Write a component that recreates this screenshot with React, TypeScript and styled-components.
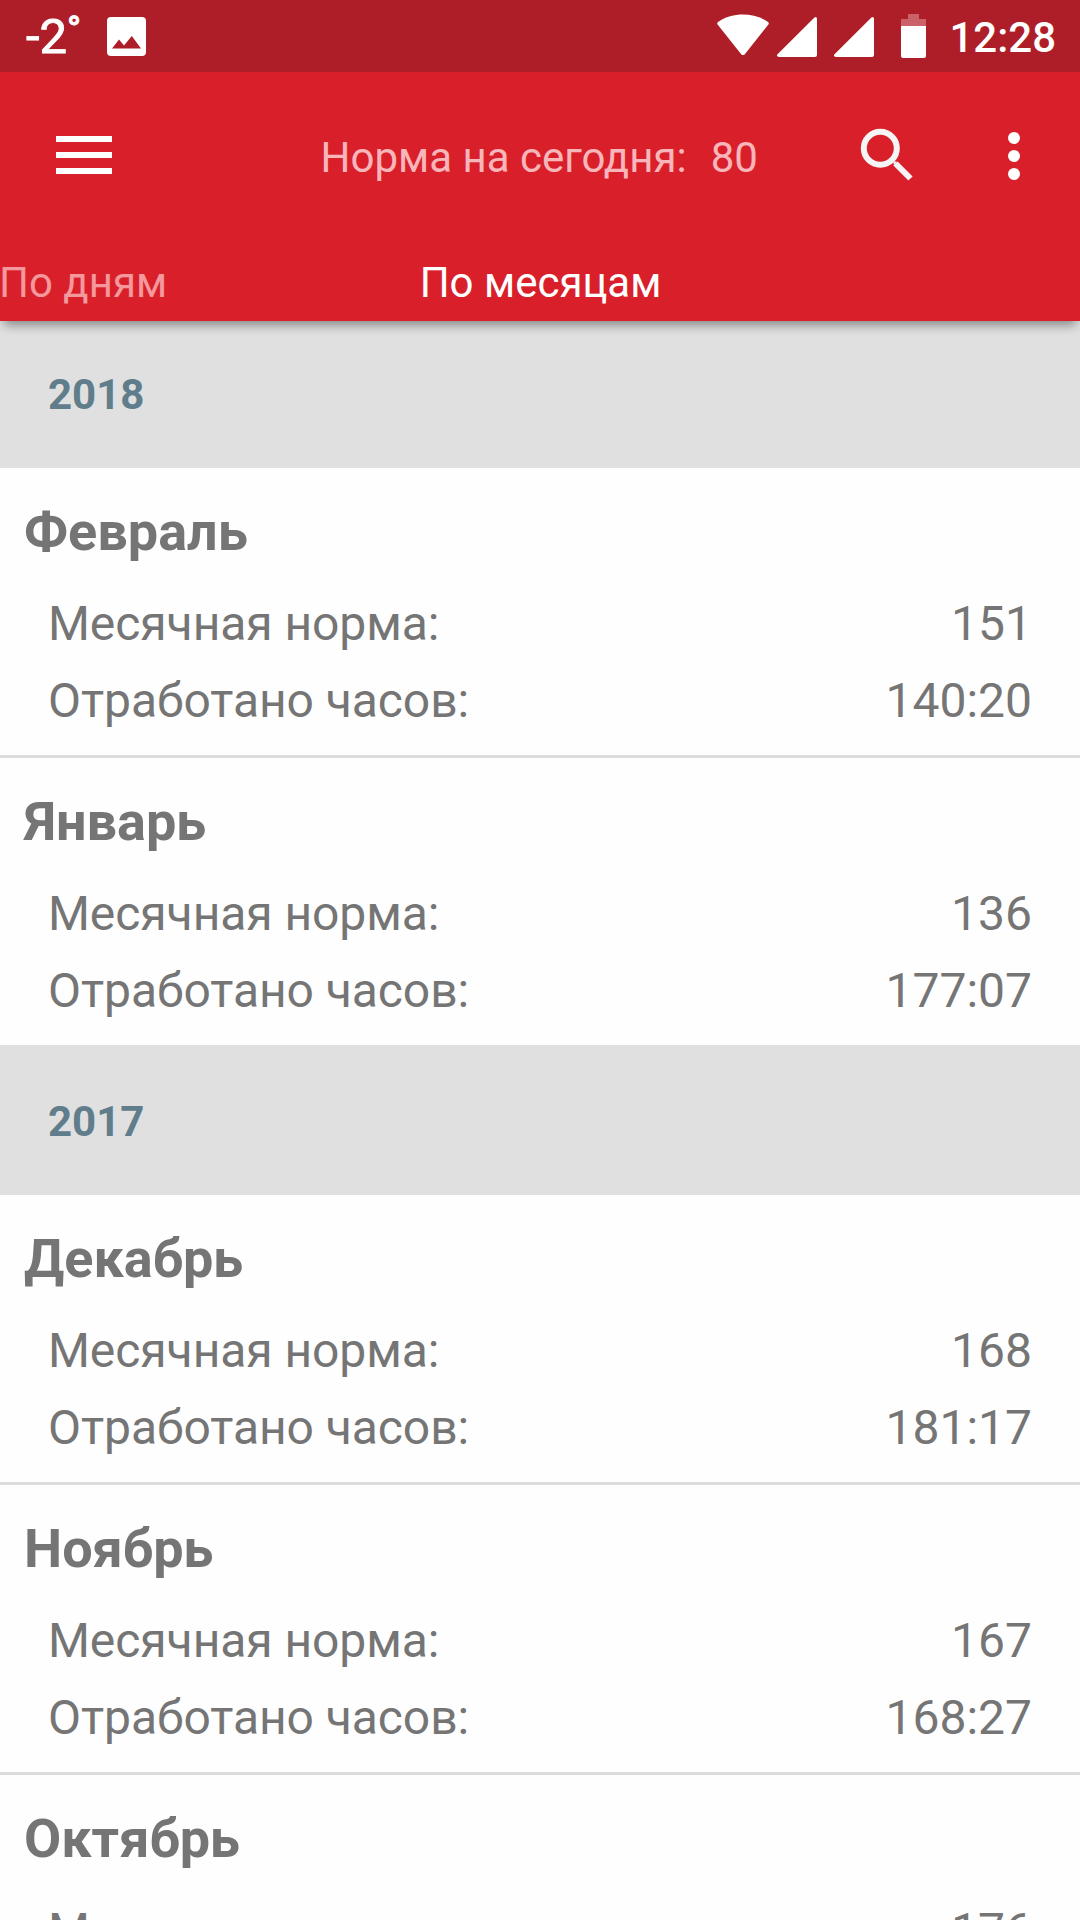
import React from "react";
import styled, { createGlobalStyle } from "styled-components";

const GlobalStyle = createGlobalStyle`
  * { box-sizing: border-box; }
  html, body { margin: 0; padding: 0; }
  body {
    background: #fefefe;
    font-family: Roboto, "Noto Sans", sans-serif;
    overflow: hidden;
  }
  svg { display: block; flex: none; }
`;

const Screen = styled.div`
  width: 1080px;
  height: 1920px;
  overflow: hidden;
  display: flex;
  flex-direction: column;
  background: #fefefe;
`;

const StatusBar = styled.header`
  flex: none;
  height: 72px;
  display: flex;
  align-items: center;
  justify-content: space-between;
  padding: 0 24px 0 26px;
  background: #ae1e28;
  color: #fff;
`;

const StatusGroup = styled.div`
  display: flex;
  align-items: center;
  height: 72px;
`;

const Temperature = styled.span`
  display: flex;
  width: 81px;
  height: 72px;
  font-size: 49px;
  line-height: 74px;
  font-weight: 400;
  -webkit-text-stroke: 0.9px #fff;
`;

const Degree = styled.span`
  font-size: 37px;
  line-height: 60px;
  font-weight: 500;
`;

const Clock = styled.time`
  width: 105px;
  padding-top: 3px;
  font-size: 42px;
  line-height: 69px;
  font-weight: 500;
  display: flex;
  justify-content: flex-end;
  white-space: nowrap;
`;

const AppBar = styled.div`
  flex: none;
  position: relative;
  z-index: 1;
  height: 249px;
  display: flex;
  flex-direction: column;
  background: #d9202a;
  box-shadow: 0 8px 10px -4px rgba(0, 0, 0, 0.4);
`;

const Toolbar = styled.div`
  height: 168px;
  display: flex;
  align-items: center;
`;

const IconButton = styled.button<{ $width: number; $lift?: number }>`
  flex: none;
  width: ${(p) => p.$width}px;
  height: 168px;
  padding: 0 0 ${(p) => p.$lift ?? 0}px;
  border: 0;
  background: none;
  display: flex;
  align-items: center;
  justify-content: center;
`;

const Title = styled.h1`
  flex: 1;
  margin: 0;
  padding: 3px 0 0 152.5px;
  display: flex;
  gap: 24px;
  font-size: 42px;
  line-height: 50px;
  font-weight: 400;
  color: #f9b6ba;
  white-space: nowrap;
`;

const Tabs = styled.nav`
  height: 81px;
  display: grid;
  grid-template-columns: 1fr auto 1fr;
  align-items: start;
`;

const Tab = styled.a<{ $active?: boolean }>`
  font-size: 42px;
  line-height: 50px;
  padding-top: 18px;
  color: ${(p) => (p.$active ? "#fff" : "#f3989c")};
  margin-left: ${(p) => (p.$active ? 1 : -1)}px;
  white-space: nowrap;
`;

const List = styled.main`
  flex: none;
  margin-top: -3px;
`;

const YearHeader = styled.h2`
  height: 150px;
  margin: 0;
  padding: 3px 48px 0;
  display: flex;
  align-items: center;
  background: #e0e0e0;
  color: #607d8b;
  font-size: 42px;
  font-weight: 700;
`;

const MonthItem = styled.article`
  height: 287px;
  padding: 10px 48px 16px;
  background: #fefefe;
  color: #757575;

  & + & {
    height: 290px;
    border-top: 3px solid #dcdcdc;
  }
`;

const MonthName = styled.h3`
  margin: 0 0 0 -24px;
  font-size: 54px;
  line-height: 107px;
  font-weight: 700;
`;

const Stat = styled.div`
  display: flex;
  justify-content: space-between;
  font-size: 48px;
  line-height: 77px;
`;

const StatLabel = styled.span`
  letter-spacing: -0.06px;
`;

const ImageIcon = () => (
  <svg width="39" height="39" viewBox="0 0 39 39">
    <rect width="39" height="39" rx="4" fill="#fff" />
    <path d="M5 31.5 12 22.5 17 28.5 24.8 19 34 31.5Z" fill="#ae1e28" />
  </svg>
);

const WifiIcon = () => (
  <svg width="52" height="42" viewBox="0 0 52 42" fill="#fff">
    <path d="M0.8 10.8C-0.2 9.5 0.1 8.6 1.4 7.7C15.5-1.8 36.5-1.8 50.6 7.7C51.9 8.6 52.2 9.5 51.2 10.8L28 39.9C26.6 41.5 25.4 41.5 24 39.9Z" />
  </svg>
);

const SignalIcon = () => (
  <svg width="40" height="40" viewBox="0 0 40 40" fill="#fff">
    <path d="M37.2 0.8C38.7-0.7 40 0.2 40 2V38Q40 40 38 40H2C0 40-0.8 38.4 0.8 36.9Z" />
  </svg>
);

const BatteryIcon = () => (
  <svg width="25" height="44" viewBox="0 0 25 44">
    <path d="M7 0H18V5H25V12H0V5H7Z" fill="#cb626a" />
    <path d="M0 12H25V42Q25 44 23 44H2Q0 44 0 42Z" fill="#fff" />
  </svg>
);

const StatusIcons = styled.div`
  display: grid;
  grid-template-columns: 60px 57px 67px 50px;
  align-items: start;
  height: 44px;

  svg:nth-child(2), svg:nth-child(3) { margin-top: 3px; }
`;

const MenuIcon = () => (
  <svg width="56" height="38" viewBox="0 0 56 38" fill="#fff">
    <path d="M0 0H56V6H0ZM0 16H56V22H0ZM0 32H56V38H0Z" />
  </svg>
);

const SearchIcon = () => (
  <svg width="54" height="54" viewBox="0 0 54 54" fill="none" stroke="#f5f5f5">
    <circle cx="20.3" cy="20.3" r="16.5" strokeWidth="6" />
    <path d="M35.5 35.5 50.5 50.5" strokeWidth="6" />
    <path d="M34.6 36.6V34.6H36.6" strokeWidth="2" />
  </svg>
);

const MoreIcon = () => (
  <svg width="12" height="48" viewBox="0 0 12 48" fill="#fff">
    <circle cx="6" cy="6" r="6" />
    <circle cx="6" cy="24" r="6" />
    <circle cx="6" cy="42" r="6" />
  </svg>
);

interface Month {
  name: string;
  norm: string;
  worked: string;
}

const years: { year: string; months: Month[] }[] = [
  {
    year: "2018",
    months: [
      { name: "Февраль", norm: "151", worked: "140:20" },
      { name: "Январь", norm: "136", worked: "177:07" },
    ],
  },
  {
    year: "2017",
    months: [
      { name: "Декабрь", norm: "168", worked: "181:17" },
      { name: "Ноябрь", norm: "167", worked: "168:27" },
      { name: "Октябрь", norm: "176", worked: "" },
    ],
  },
];

export default function App() {
  return (
    <Screen>
      <GlobalStyle />
      <StatusBar>
        <StatusGroup>
          <Temperature>
            -2<Degree>°</Degree>
          </Temperature>
          <ImageIcon />
        </StatusGroup>
        <StatusGroup>
          <StatusIcons>
            <WifiIcon />
            <SignalIcon />
            <SignalIcon />
            <BatteryIcon />
          </StatusIcons>
          <Clock>12:28</Clock>
        </StatusGroup>
      </StatusBar>
      <AppBar>
        <Toolbar>
          <IconButton $width={168} $lift={2} aria-label="Меню">
            <MenuIcon />
          </IconButton>
          <Title>
            <span>Норма на сегодня:</span>
            <span>80</span>
          </Title>
          <IconButton $width={122} $lift={2} aria-label="Поиск">
            <SearchIcon />
          </IconButton>
          <IconButton $width={132} aria-label="Ещё">
            <MoreIcon />
          </IconButton>
        </Toolbar>
        <Tabs>
          <Tab>По дням</Tab>
          <Tab $active>По месяцам</Tab>
        </Tabs>
      </AppBar>
      <List>
        {years.map(({ year, months }) => (
          <section key={year}>
            <YearHeader>{year}</YearHeader>
            {months.map((m) => (
              <MonthItem key={m.name}>
                <MonthName>{m.name}</MonthName>
                <Stat>
                  <StatLabel>Месячная норма:</StatLabel>
                  <span>{m.norm}</span>
                </Stat>
                {m.worked && (
                  <Stat>
                    <StatLabel>Отработано часов:</StatLabel>
                    <span>{m.worked}</span>
                  </Stat>
                )}
              </MonthItem>
            ))}
          </section>
        ))}
      </List>
    </Screen>
  );
}
